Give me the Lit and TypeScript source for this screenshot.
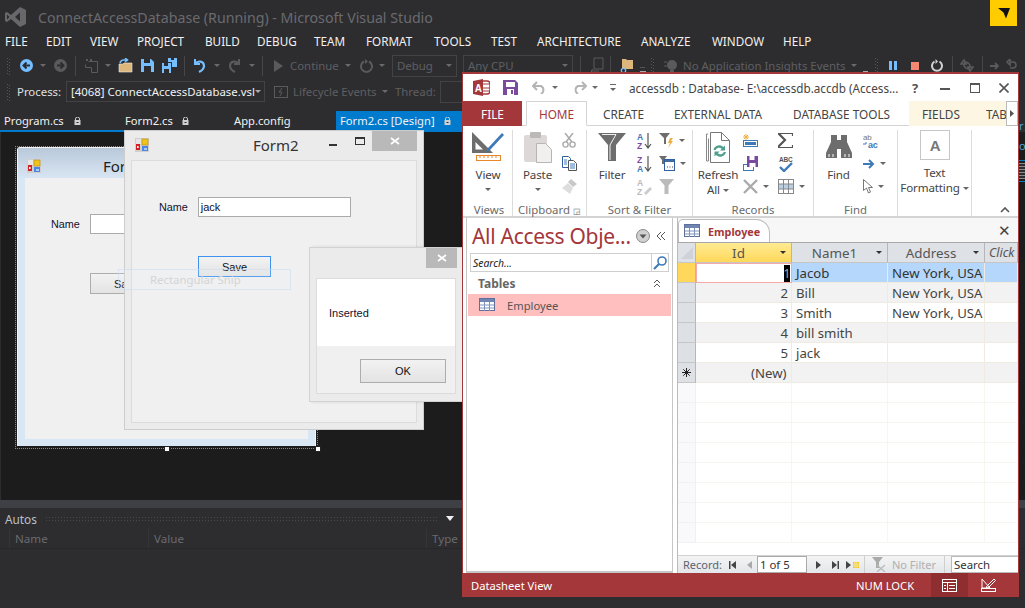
import { LitElement, html, css, svg } from "lit";
import { customElement } from "lit/decorators.js";

type Cell = { x: number; c: unknown; cls?: string };

const dd = html`<span class="dd"></span>`;
const dim = (t: string) => html`<span class="dimt">${t}</span>`;

const ic = (w: number, h: number, body: unknown, vb?: string) =>
  html`<svg width=${w} height=${h} viewBox=${vb ?? `0 0 ${w} ${h}`} class="ic">${body}</svg>`;

const grip = ic(4, 18, svg`<g fill="#55555a">${[1, 4, 7, 10, 13, 16].map((y) => svg`<rect x="0" y=${y} width="1" height="1"/><rect x="2" y=${y + 1} width="1" height="1"/>`)}</g>`);
const tsep = html`<span class="tsep"></span>`;
const lock = ic(7, 8, svg`<path d="M1.5 3V2a2 2 0 0 1 4 0v1" fill="none" stroke="#d0d0d0"/><rect x="0.5" y="3" width="6" height="5" fill="#d0d0d0"/><rect x="2.5" y="5" width="2" height="1" fill="#2d2d30"/>`);

const appIcon = ic(15, 15, svg`<rect x="0" y="0" width="14" height="14" fill="#cfcfcf"/><rect x="1" y="1" width="5" height="5" fill="#e6e6e6"/><rect x="7" y="1" width="6" height="6" fill="#f0c419" stroke="#b98a10" stroke-width=".6"/><rect x="1" y="6" width="4" height="6" fill="#d42020"/><rect x="2" y="8" width="1.6" height="2" fill="#fff"/><rect x="7" y="8" width="6" height="5" fill="#4d86e0"/><rect x="9" y="10" width="3" height="2" fill="#a8ccf4"/>`);

const tableIcon = ic(17, 14, svg`<rect x=".5" y=".5" width="15" height="12" fill="#fff" stroke="#5f6f9a"/><rect x="1" y="1" width="14" height="3" fill="#6f85b4"/><path d="M1 7h14M1 10h14M5.5 4v9M10.5 4v9" stroke="#7f95bf" fill="none"/>`);

@customElement("app-root")
export class AppRoot extends LitElement {
  static styles = css`
    :host { display: block; width: 1025px; height: 608px; position: relative; overflow: hidden; background: #2d2d30;
      font-family: "Noto Sans", "Open Sans", sans-serif; color: #f1f1f1; }
    * { box-sizing: border-box; }
    .ic { display: block; flex: none; }
    .row { display: flex; align-items: center; white-space: nowrap; }
    .cell { flex: none; display: flex; align-items: center; overflow: visible; }
    .vs { display: flex; flex-direction: column; width: 1025px; height: 608px; }
    .vstitle { height: 34px; font-size: 14.2px; color: #6a6a6e; padding-left: 5px; gap: 12px; position: relative; align-items: center; flex: none; }
    .flag { margin-left: auto; margin-right: 8px; width: 27px; height: 26px; background: #ffcc00; align-self: flex-start; display: flex; align-items: center; justify-content: center; }
    .menu { height: 14px; font-size: 11.7px; color: #f1f1f1; flex: none; }
    .tool { height: 23px; margin-top: 6px; font-size: 11.4px; color: #5d5d60; flex: none; }
    .tool2 { height: 23px; margin-top: 3px; font-size: 11.4px; color: #5d5d60; flex: none; }
    .dimt { color: #5f5f62; }
    .lit { color: #e0e0e0; }
    .dd { display: inline-block; width: 0; height: 0; border-left: 3.5px solid transparent; border-right: 3.5px solid transparent; border-top: 3.5px solid #6a6a6a; flex: none; }
    .dd.l { border-top-color: #aaa; }
    .tsep { display: block; width: 1px; height: 20px; background: #46464a; }
    .combo { height: 22px; border: 1px solid #434346; display: flex; align-items: center; padding: 0 4px; justify-content: space-between; color: #5f5f62; }
    .combo.active { color: #f1f1f1; height: 21px; }
    .tabs { height: 19px; margin-top: 8px; font-size: 11.2px; color: #f1f1f1; flex: none; }
    .tabs .cell { height: 19px; }
    .act { background: #007acc; padding-left: 4px; gap: 9px; }
    .tabline { height: 2px; background: #007acc; width: 462px; flex: none; }
    .doc { flex: 1; background: #1c1c1c; margin-left: 1px; position: relative; min-height: 0; }
    .split { height: 8px; background: #3f3f46; flex: none; }
    .autos { height: 100px; flex: none; background: #2d2d30; }
    .ahead { height: 21px; font-size: 11.8px; color: #b8c0c8; padding: 0 5px; gap: 8px; }
    .dots { height: 5px; background-image: radial-gradient(#4a4a4e 0.6px, transparent 0.7px); background-size: 3px 3px; width: 393px; flex: none; }
    .tri { width: 0; height: 0; border-left: 4px solid transparent; border-right: 4px solid transparent; border-top: 5px solid #f0f0f0; }
    .acols { height: 20px; font-size: 11.6px; color: #6a6a6e; border-bottom: 1px solid #262628; padding-left: 9px; }
    .acols .cell { height: 19px; border-left: 1px solid #353538; padding-left: 5px; }
    .side { position: absolute; left: 1019px; top: 120px; width: 6px; display: flex; flex-direction: column; overflow: hidden; }
    .side span { display: block; }
    .sb { color: #4ea6dc; font-size: 11px; line-height: 12px; height: 20px; }
    .sl { height: 1px; width: 6px; background: #007acc; }
    .ss { height: 16px; width: 6px; margin: 2px 0; background: repeating-linear-gradient(#8a8a8a 0 1px, #2d2d30 1px 3px); }

    /* winforms */
    .wf { font-family: "Liberation Sans", Arial, sans-serif; font-size: 10.8px; color: #101030; }
    .select { position: absolute; left: 14px; top: 14px; width: 303px; height: 303px; border: 1px dotted #8a8a8a; }
    .handle { position: absolute; width: 6px; height: 6px; background: #fff; border: 1px solid #222; top: 299px; }
    .h1 { left: 148px; } .h2 { left: 299px; }
    .dform { position: absolute; left: 16px; top: 15px; width: 299px; height: 299px; background: #d9e6f4; display: flex; flex-direction: column; border: 1px solid #f4f4f4; border-bottom: 0; border-radius: 3px 3px 0 0; }
    .dtitle { height: 30px; background: linear-gradient(#b9c9da, #d8e5f3); padding: 6px 0 0 9px; font-size: 15px; color: #222; font-family: "Noto Sans", sans-serif; flex: none; }
    .dt { margin-left: 61px; }
    .dclient { flex: 1; margin: 0 7px 7px; background: #f0f0f0; padding: 36px 0 0 26px; }
    .nm { display: flex; align-items: center; height: 20px; gap: 10px; }
    .tb { display: block; width: 153px; height: 20px; border: 1px solid #ababab; background: #fff; padding: 2px; color: #101030; line-height: 14px; font-size: 11px; }
    .wbtn { width: 73px; height: 21px; border: 1px solid #adadad; background: linear-gradient(#f2f2f2, #e3e3e3); display: flex; align-items: center; justify-content: center; color: #101010; font-size: 11px; }
    .dbtn { margin: 39px 0 0 39px; }
    .win2 { position: absolute; left: 124px; top: 130px; width: 300px; height: 300px; background: #ebebeb; border: 1px solid #cdcdcd; display: flex; flex-direction: column; }
    .w2t { height: 29px; flex: none; align-items: flex-start; }
    .w2t .appi { margin: 7px 0 0 10px; }
    .w2n { margin: 4px 0 0 103px; font: 15px "Noto Sans", sans-serif; color: #333; width: 76px; flex: none; }
    .mn { width: 8px; height: 2px; background: #333; margin: 13px 0 0 0; flex: none; }
    .mx { width: 10px; height: 8px; border: 1px solid #333; border-top-width: 2px; margin: 6px 0 0 18px; flex: none; }
    .xb { width: 45px; height: 20px; background: #b9b9b9; display: flex; align-items: center; justify-content: center; margin-left: 7px; flex: none; }
    .w2c { flex: 1; margin: 0 6px 6px; border: 1px solid #dcdcdc; background: #f0f0f0; padding: 36px 0 0 27px; }
    .sbtn { margin: 39px 0 0 39px; border: 1px solid #3f93f0; }
    .snip { position: absolute; left: 118px; top: 269px; width: 173px; height: 21px; border: 1px solid rgba(200,220,240,.55); padding-left: 31px; font: 11.4px "Noto Sans", sans-serif; color: #d4d4d4; display: flex; align-items: center; background: rgba(238,242,246,.15); }
    .msg { position: absolute; left: 309px; top: 247px; width: 154px; height: 155px; background: #ebebeb; border: 1px solid #d2d2d2; box-shadow: 3px 0 3px rgba(0,0,0,.12); display: flex; flex-direction: column; }
    .msgt { height: 30px; flex: none; display: flex; justify-content: flex-end; padding-right: 5px; }
    .msgt .xb { width: 31px; margin: 0; }
    .msgc { flex: 1; margin: 0 6px 7px; border: 1px solid #dcdcdc; background: #f0f0f0; display: flex; flex-direction: column; }
    .msgw { height: 67px; background: #fff; padding-left: 12px; display: flex; align-items: center; font-size: 11px; }
    .okr { display: flex; justify-content: flex-end; padding: 13px 9px 0 0; }
    .okb { width: 86px; height: 24px; }

    /* access */
    .acc { position: absolute; left: 462px; top: 72px; width: 557px; height: 525px; background: #fff; border: 1px solid #a4373a; border-top-width: 2px; border-bottom: 0; display: flex; flex-direction: column; color: #444; font-family: "Noto Sans", sans-serif; }
    .att { height: 27px; flex: none; padding-left: 10px; font-size: 11.7px; color: #444; }
    .att .cell { height: 27px; }
    .atab { height: 25px; flex: none; align-items: stretch; font-size: 11.8px; border-bottom: 1px solid #d4d4d4; position: relative; }
    .atab .cell { height: 25px; }
    .file { background: #a4373a; color: #fff; justify-content: center; }
    .home { background: #fff; color: #a4373a; border: 1px solid #d4d4d4; border-bottom: 1px solid #fff; justify-content: center; height: 25px; }
    .fields { background: #fdf6e3; padding-left: 13px; }
    .tabc { overflow: hidden; background: #fdf6e3; }
    .scr { width: 12px; background: #fff; border: 1px solid #bbb; display: flex; align-items: center; justify-content: center; flex: none; height: 25px; }
    .rib { height: 92px; flex: none; display: flex; padding-top: 4px; font-size: 11.6px; letter-spacing: -.15px; color: #444; border-bottom: 2px solid #d4d4d4; position: relative; padding-left: 3px; }
    .grp { flex: none; display: flex; flex-direction: column; border-right: 1px solid #dcdcdc; height: 86px; }
    .gb { flex: 1; display: flex; min-height: 0; }
    .gl { height: 13px; line-height: 13px; font-size: 11.4px; letter-spacing: 0; text-align: center; color: #6a6a6a; white-space: nowrap; }
    .big { display: flex; flex-direction: column; align-items: center; flex: none; line-height: 15px; white-space: nowrap; }
    .bi { height: 34px; display: flex; align-items: center; justify-content: center; margin-bottom: 3px; }
    .big .dd { margin-top: 6px; border-top-color: #666; }
    .inl { display: flex; align-items: center; gap: 3px; }
    .big .inl .dd { margin-top: 1px; }
    .sm { display: grid; grid-auto-rows: 23px; flex: none; margin-top: -1px; }
    .si { display: flex; align-items: center; gap: 5px; }
    .si .dd { border-top-color: #666; }
    .ta { display: block; }
    .tx { margin-top: 5px; }
    .colx { position: absolute; right: 8px; bottom: 3px; }
    .amain { flex: 1; display: flex; min-height: 0; padding-left: 3px; }
    .nav { width: 207px; flex: none; border: 1px solid #c6c6c6; border-top: 0; border-bottom: 2px solid #c6c6c6; display: flex; flex-direction: column; padding: 0 1px; }
    .navh { height: 35px; flex: none; align-items: center; font-size: 21px; color: #a4373a; padding-left: 4px; }
    .navt { width: 164px; flex: none; letter-spacing: -.3px; }
    .navc { margin-left: 7px; }
    .srch { height: 19px; margin: 0 2px; border: 1px solid #cfcfcf; display: flex; align-items: center; justify-content: space-between; font-style: italic; font-size: 10.4px; color: #222; padding-left: 2px; flex: none; }
    .srch b { font-weight: 400; }
    .mag { border-left: 1px solid #cfcfcf; width: 17px; height: 17px; display: flex; align-items: center; justify-content: center; }
    .navg { height: 22px; flex: none; font-size: 12px; font-weight: 700; color: #666; padding-left: 10px; justify-content: space-between; padding-right: 10px; }
    .navi { height: 22px; background: #ffbfbf; padding-left: 11px; gap: 11px; font-size: 11.2px; color: #555; flex: none; }
    .ds { width: 341px; flex: none; display: flex; flex-direction: column; border-left: 1px solid #bbb; margin-left: 4px; }
    .dst { height: 24px; flex: none; background: #f7f7f7; position: relative; display: flex; align-items: flex-end; justify-content: space-between; padding-right: 7px; }
    .dtab { width: 92px; height: 23px; background: #fff; border: 1px solid #bdbdbd; border-bottom: 0; border-radius: 5px 14px 0 0; display: flex; align-items: center; padding-left: 5px; gap: 7px; font-weight: 700; font-size: 10.8px; color: #a4373a; }
    .dx { align-self: center; font-size: 15px; color: #444; line-height: 14px; }
    .grid { flex: 1; display: grid; grid-template-columns: 18px 96px 96px 97px 33px; grid-auto-rows: 20px; align-content: start; background: #fff; overflow: hidden; min-height: 0; font-size: 13.2px; color: #444; border-top: 1px solid #a8a8a8; }
    .gc { border-right: 1px solid #efebe0; border-bottom: 1px solid #efebe0; padding: 0 3px 0 4px; display: flex; align-items: center; white-space: nowrap; overflow: hidden; min-width: 0; }
    .gh { background: #dee1e6; border-right: 1px solid #b6b6b6; border-bottom: 1px solid #c6c6c6; justify-content: center; color: #555; position: relative; font-size: 13.4px; padding-right: 14px; }
    .gc.corner { padding: 0; }
    .gh .dd { position: absolute; right: 5px; top: 8px; border-top-color: #333; }
    .gh.idh { background: linear-gradient(#ffeb94, #ffd85a); color: #555; }
    .gh.clk { font-style: italic; justify-content: flex-start; font-size: 12.4px; padding: 0 0 0 4px; }
    .sel { background: #dde1e6; border-right: 1px solid #b6b6b6; border-bottom: 1px solid #c6c6c6; padding: 0; justify-content: center; color: #222; }
    .sel.cur { background: #ffd75a; }
    .sel.em { background: #f9f9fb; border-right-color: #f0f0f0; border-bottom-color: #f0f0f6; }
    .num { justify-content: flex-end; }
    .alt { background: #f2f2f2; }
    .hi { background: #b4d7fb; color: #333; }
    .cur1 { border: 1px solid #f5a9a9; padding-right: 1px; }
    .cur1 i { font-style: normal; background: #000; color: #aaa; width: 6px; height: 17px; display: flex; align-items: center; justify-content: center; font-size: 12px; }
    .newc { padding-left: 55px; }
    .gc.e { border-color: #f7f5ef; }
    .rn { height: 18px; flex: none; font-size: 11px; color: #5a6470; background: linear-gradient(#f4f4f4, #e3e6ea); border-top: 1px solid #d2d2d2; padding-left: 5px; }
    .rn .cell { height: 17px; }
    .rbox { height: 17px; width: 50px; border: 1px solid #aaa; background: #fff; color: #333; padding-left: 2px; display: flex; align-items: center; font-size: 11.4px; }
    .rsrch { height: 17px; background: #fff; border: 1px solid #bbb; color: #333; padding-left: 2px; display: flex; align-items: center; width: 67px; border-right: 0; font-size: 11.4px; }
    .nf { color: #b0b0b0; }
    .sep2 { width: 1px; height: 17px; background: #cfcfcf; }
    .ast { height: 24px; flex: none; background: #a4373a; color: #fff; font-size: 11.2px; padding-left: 8px; }
    .ast .cell { height: 24px; }
    .viewon { background: #8e2e31; justify-content: center; }
    .dsg { margin-left: 13px; }
    .tlh { font-size: 13px; color: #555; font-weight: 700; }
    .tlm { display: block; width: 10px; height: 2px; background: #555; margin-top: 3px; }
    .lk1 { margin-left: 10px; } .lk2 { margin-left: 9px; }
    .clipi { font-size: 8px; }
  `;

  private row(items: Cell[], end: number) {
    return items.map((it, i) => {
      const next = i + 1 < items.length ? items[i + 1].x : end;
      return html`<span class="cell ${it.cls ?? ""}" style="width:${next - it.x}px">${it.c}</span>`;
    });
  }

  private titleRow() {
    return html`<div class="row vstitle">
      ${ic(21, 20, svg`<path fill="#68686c" fill-rule="evenodd" d="M15 0l6 3v14l-6 3-9-8-4 3-2-1V6l2-1 4 3zM15 5.5L10 10l5 4.5zM2 7.5v5L4.5 10z"/>`)}
      <span>ConnectAccessDatabase (Running) - Microsoft Visual Studio</span>
      <span class="flag">${ic(12, 11, svg`<path d="M0 0h12L8 10.5 5.5 4.5z" fill="#111"/>`)}</span>
    </div>`;
  }

  private menu() {
    const m: [number, string][] = [[5, "FILE"], [46, "EDIT"], [90, "VIEW"], [137, "PROJECT"], [205, "BUILD"], [257, "DEBUG"], [314, "TEAM"], [366, "FORMAT"], [434, "TOOLS"], [491, "TEST"], [537, "ARCHITECTURE"], [641, "ANALYZE"], [712, "WINDOW"], [783, "HELP"]];
    return html`<div class="row menu" style="padding-left:5px">${this.row(m.map(([x, t]) => ({ x, c: t })), 830)}</div>`;
  }

  private toolbar() {
    const blue = "#75beff";
    const grey = "#5a5a5e";
    const circ = (f: string, d: string) => ic(13, 13, svg`<circle cx="6.5" cy="6.5" r="6.5" fill=${f}/><path d=${d} fill="none" stroke="#2d2d30" stroke-width="2"/>`);
    const items: Cell[] = [
      { x: 7, c: grip },
      { x: 20, c: circ(blue, "M10 6.5H4M6.5 3.5l-3 3 3 3") },
      { x: 40, c: dd },
      { x: 54, c: circ(grey, "M3 6.5h6M6.5 3.5l3 3-3 3") },
      { x: 75, c: tsep },
      { x: 85, c: ic(13, 15, svg`<path d="M3.5 3.5h9v11h-6v-5h-6v-3" fill="none" stroke=${grey}/><path d="M1 1l2 2M3 1L1 3M5 1l2 2M7 1L5 3" stroke=${grey}/>`) },
      { x: 105, c: dd },
      { x: 118, c: ic(15, 15, svg`<path d="M1 6h4l1-1h8v9H1z" fill="#dcb67a" stroke="#eee" stroke-width=".6"/><path d="M2 5a4 4 0 0 1 4-3h3M7 0l2.5 2L7 4" fill="none" stroke=${blue} stroke-width="1.6"/>`) },
      { x: 141, c: ic(13, 13, svg`<path d="M0 0h10l3 3v10H0z" fill=${blue}/><rect x="3" y="0" width="6" height="4" fill="#2d2d30"/><rect x="3" y="7" width="7" height="6" fill="#2d2d30"/>`) },
      { x: 162, c: ic(15, 15, svg`<path d="M0 5h9v10H0z" fill=${blue}/><path d="M6 0h9v9h-5V4H6z" fill=${blue}/><rect x="2" y="5" width="4" height="3" fill="#2d2d30"/><rect x="9" y="0" width="3" height="2" fill="#2d2d30"/><rect x="2" y="11" width="5" height="4" fill="#2d2d30"/>`) },
      { x: 184, c: tsep },
      { x: 193, c: ic(13, 15, svg`<path d="M2 1v5h5" fill="none" stroke=${blue} stroke-width="2"/><path d="M2 6c3-4 9-3 9 2 0 3-3 5-5 6" fill="none" stroke=${blue} stroke-width="2.2"/>`) },
      { x: 214, c: dd },
      { x: 228, c: ic(13, 15, svg`<path d="M11 1v5H6" fill="none" stroke=${grey} stroke-width="2"/><path d="M11 6C8 2 2 3 2 8c0 3 3 5 5 6" fill="none" stroke=${grey} stroke-width="2.2"/>`) },
      { x: 249, c: dd },
      { x: 262, c: tsep },
      { x: 274, c: ic(9, 12, svg`<path d="M0 0l9 6-9 6z" fill=${grey}/>`) },
      { x: 290, c: dim("Continue") },
      { x: 345, c: dd },
      { x: 360, c: ic(13, 14, svg`<path d="M4 2.5a5.5 5.5 0 1 0 5 0" fill="none" stroke=${grey} stroke-width="2"/><path d="M5 0v5l3-2.5z" fill=${grey}/>`) },
      { x: 379, c: dd },
      { x: 392, c: html`<span class="combo" style="width:65px">Debug ${dd}</span>` },
      { x: 463, c: html`<span class="combo" style="width:110px">Any CPU ${dd}</span>` },
      { x: 580, c: tsep },
      { x: 590, c: ic(15, 18, svg`<path d="M4 1h9v11H4zM1 14h8M3 12l-2 2 2 2M9 16h5" fill="none" stroke=${grey}/>`) },
      { x: 610, c: tsep },
      { x: 620, c: ic(14, 18, svg`<path d="M2 2h4l1 1h6v9H2z" fill="#dcb67a"/><circle cx="3.5" cy="13.5" r="2.2" fill="#2d2d30" stroke=${blue} stroke-width="1.3"/><path d="M1.8 15.5L0 17" stroke=${blue} stroke-width="1.3"/>`) },
      { x: 640, c: ic(6, 14, svg`<rect y="12" width="6" height="1" fill="#aaa"/><rect y="8" width="5" height="1" fill="#555"/>`) },
      { x: 651, c: grip },
      { x: 664, c: ic(14, 14, svg`<circle cx="8" cy="6" r="5" fill=${grey}/><rect x="6" y="11" width="4" height="3" fill=${grey}/><path d="M0 3h3M0 7h3" stroke=${grey}/>`) },
      { x: 683, c: dim("No Application Insights Events") },
      { x: 851, c: dd },
      { x: 863, c: ic(5, 14, svg`<rect y="12" width="5" height="1" fill="#aaa"/>`) },
      { x: 875, c: grip },
      { x: 889, c: ic(8, 9, svg`<rect width="3" height="9" fill=${blue}/><rect x="5" width="3" height="9" fill=${blue}/>`) },
      { x: 911, c: ic(8, 8, svg`<rect width="8" height="8" fill="#f48771"/>`) },
      { x: 931, c: ic(12, 13, svg`<path d="M3.5 2.5a5 5 0 1 0 5 0" fill="none" stroke="#d0d0d0" stroke-width="2"/><path d="M4.5 0v5L7 2.5z" fill="#d0d0d0"/>`) },
      { x: 952, c: tsep },
      { x: 960, c: ic(14, 13, svg`<path d="M4 1L1 5h5zM10 12l3-4H8zM4 4a4 4 0 0 1 6 4M10 9a4 4 0 0 1-6-4" fill="none" stroke=${grey} stroke-width="1.6"/>`) },
      { x: 982, c: tsep },
      { x: 990, c: ic(10, 10, svg`<path d="M0 5h8M5 2l3 3-3 3" fill="none" stroke=${grey} stroke-width="1.8"/>`) },
      { x: 1005, c: ic(14, 13, svg`<path d="M2 3l3-3v6zM5 3h3a3 3 0 0 1 0 6H5" fill="none" stroke=${grey} stroke-width="1.6"/>`) },
    ];
    return html`<div class="row tool" style="padding-left:7px">${this.row(items, 1025)}</div>`;
  }

  private toolbar2() {
    const items: Cell[] = [
      { x: 7, c: grip },
      { x: 17, c: html`<span class="lit">Process:</span>` },
      { x: 66, c: html`<span class="combo active" style="width:199px"><span>[4068] ConnectAccessDatabase.vsl</span><span class="dd l"></span></span>` },
      { x: 274, c: ic(14, 12, svg`<rect x=".5" y=".5" width="13" height="11" fill="none" stroke="#5a5a5e"/><path d="M8 2L5 6h3l-2 4" fill="none" stroke="#5a5a5e"/>`) },
      { x: 293, c: dim("Lifecycle Events") },
      { x: 382, c: dd },
      { x: 395, c: dim("Thread:") },
      { x: 440, c: html`<span class="combo" style="width:40px"></span>` },
    ];
    return html`<div class="row tool2" style="padding-left:7px">${this.row(items, 480)}</div>`;
  }

  private tabs() {
    const items: Cell[] = [
      { x: 4, c: html`<span>Program.cs</span><span class="lk1">${lock}</span>` },
      { x: 125, c: html`<span>Form2.cs</span><span class="lk2">${lock}</span>` },
      { x: 234, c: "App.config" },
      { x: 336, c: html`<span>Form2.cs [Design]</span>${lock}`, cls: "act" },
    ];
    return html`<div class="row tabs" style="padding-left:4px">${this.row(items, 462)}</div><div class="tabline"></div>`;
  }

  private designForm() {
    return html`<div class="select wf"><div class="handle h1"></div><div class="handle h2"></div></div>
      <div class="dform wf">
        <div class="row dtitle">${appIcon}<span class="dt">Form2</span></div>
        <div class="dclient">
          <div class="nm"><span>Name</span><span class="tb"></span></div>
          <div class="wbtn dbtn">Save</div>
        </div>
      </div>`;
  }

  private form2() {
    const x = ic(10, 10, svg`<path d="M1 2l8 6M9 2L1 8" stroke="#fff" stroke-width="1.6"/>`);
    return html`<div class="win2 wf">
      <div class="row w2t"><span class="appi">${appIcon}</span><span class="w2n">Form2</span><span class="mn"></span><span class="mx"></span><span class="xb">${x}</span></div>
      <div class="w2c">
        <div class="nm"><span>Name</span><span class="tb">jack</span></div>
        <div class="wbtn sbtn">Save</div>
      </div>
    </div>
    <div class="snip">Rectangular Snip</div>
    <div class="msg wf">
      <div class="msgt"><span class="xb">${x}</span></div>
      <div class="msgc">
        <div class="msgw">Inserted</div>
        <div class="okr"><div class="wbtn okb">OK</div></div>
      </div>
    </div>`;
  }

  private accessTitle() {
    const items: Cell[] = [
      { x: 473, c: ic(17, 17, svg`<rect x="6" y="2" width="11" height="13" rx="3" fill="none" stroke="#a4373a" stroke-width="1.4"/><path d="M8 5h9M8 9h9M8 12h9" stroke="#a4373a"/><path d="M0 2l10-2v17L0 15z" fill="#a4373a"/><text x="1.8" y="12.5" font-size="10" font-weight="700" fill="#fff" font-family="Liberation Sans">A</text>`) },
      { x: 503, c: ic(15, 15, svg`<path d="M0 0h12l3 3v12H0z" fill="#7a4a9e"/><rect x="3" y="2" width="9" height="5" fill="#fff"/><rect x="4" y="9" width="7" height="6" fill="#fff"/><rect x="8" y="10" width="2" height="4" fill="#7a4a9e"/>`) },
      { x: 532, c: ic(15, 13, svg`<path d="M5 1L1 5l4 4M1 5h8a4.5 4.5 0 0 1 0 8" fill="none" stroke="#b5b5b5" stroke-width="2"/>`) },
      { x: 552, c: dd },
      { x: 572, c: ic(15, 13, svg`<path d="M10 1l4 4-4 4M14 5H6a4.5 4.5 0 0 0 0 8" fill="none" stroke="#b5b5b5" stroke-width="2"/>`) },
      { x: 592, c: dd },
      { x: 610, c: ic(7, 8, svg`<rect width="6" height="1" fill="#666"/><path d="M0 4h6L3 7z" fill="#666"/>`) },
      { x: 629, c: "accessdb : Database- E:\\accessdb.accdb (Access..." },
      { x: 912, c: html`<span class="tlh">?</span>` },
      { x: 940, c: html`<span class="tlm"></span>` },
      { x: 970, c: ic(10, 10, svg`<rect x=".5" y=".5" width="9" height="9" fill="none" stroke="#555"/><rect width="10" height="2" fill="#555"/>`) },
      { x: 999, c: ic(10, 10, svg`<path d="M.5.5l9 9M9.5.5l-9 9" stroke="#555" stroke-width="1.6"/>`) },
    ];
    return html`<div class="row att">${this.row(items, 1018)}</div>`;
  }

  private accessTabs() {
    const items: Cell[] = [
      { x: 463, c: "FILE", cls: "file" },
      { x: 522, c: "" },
      { x: 526, c: "HOME", cls: "home" },
      { x: 587, c: "" },
      { x: 603, c: "CREATE" },
      { x: 674, c: "EXTERNAL DATA" },
      { x: 793, c: "DATABASE TOOLS" },
      { x: 909, c: "FIELDS", cls: "fields" },
      { x: 986, c: "TAB", cls: "tabc" },
    ];
    return html`<div class="row atab">${this.row(items, 1006)}<span class="scr">${ic(4, 7, svg`<path d="M0 0l4 3.5L0 7z" fill="#555"/>`)}</span></div>`;
  }

  private ribbon() {
    const g = "#6d6d6d";
    const bl = "#3f7ab8";
    const pu = "#7a4a9e";
    const view = ic(32, 30, svg`<path fill=${g} fill-rule="evenodd" d="M0 0l21 21H0zM3.5 10v7.5H11z"/><path d="M30 1l-14 15-2 4 4-2L32 3z" fill=${bl}/><rect x="4.5" y="23.5" width="24" height="5" fill="#fff" stroke="#e8872c"/><path d="M8 24v2M12 24v2M16 24v2M20 24v2M24 24v2" stroke="#e8872c"/>`);
    const paste = ic(30, 31, svg`<rect x="1" y="3" width="23" height="27" rx="2" fill="#dcd8d8"/><rect x="7" y="0" width="11" height="6" rx="1" fill="#bdb8b8"/><path d="M13.5 11.5h9l6 6v13h-15z" fill="#f2efef" stroke="#b9b4b4"/>`);
    const scis = ic(15, 15, svg`<path d="M3 0l7 9M11 0L4 9" stroke="#aaa" stroke-width="1.5"/><circle cx="3.5" cy="11.5" r="2.6" fill="none" stroke="#aaa" stroke-width="1.4"/><circle cx="10.5" cy="11.5" r="2.6" fill="none" stroke="#aaa" stroke-width="1.4"/>`);
    const copy = ic(15, 15, svg`<path d="M.5.5h6l2 2v9h-8z" fill="#fff" stroke="#2f5f9f"/><path d="M6.5 4.5h5l3 3v7h-8z" fill="#fff" stroke="#555"/><path d="M8 8h5M8 10h5M8 12h5M2 4h3M2 6h3M2 8h3" stroke="#3f7ab8"/>`);
    const brush = ic(15, 15, svg`<path d="M9 0l6 5-4 3-5-5z" fill="#c8c8c8"/><path d="M6 4l5 5-3 6-8-6z" fill="#ddd"/>`);
    const funnel = ic(28, 28, svg`<path d="M0 0h28L18 12v16h-8V12z" fill=${g}/><path d="M4 1.5h14L12 12v15" fill="none" stroke="#fff" stroke-width=".9"/>`);
    const az = (a: string, b: string, c1: string, c2: string) => ic(15, 16, svg`<text x="0" y="7" font-size="8.5" font-weight="700" fill=${c1} font-family="Liberation Sans">${a}</text><text x="0" y="15.5" font-size="8.5" font-weight="700" fill=${c2} font-family="Liberation Sans">${b}</text><path d="M11 0v14M8 11l3 4 3-4" fill="none" stroke="#555" stroke-width="1.2"/>`);
    const azg = ic(15, 16, svg`<text x="0" y="7" font-size="8.5" font-weight="700" fill="#bbb" font-family="Liberation Sans">A</text><text x="0" y="15.5" font-size="8.5" font-weight="700" fill="#bbb" font-family="Liberation Sans">Z</text><path d="M7 14l6-6 2 2-6 6z" fill="#ccc"/>`);
    const fbolt = ic(15, 15, svg`<path d="M0 0h11L7 5v6H5V5z" fill=${g}/><path d="M11 5l3 0-2 3h2l-5 7 2-5H9z" fill="#f0b040"/>`);
    const fform = ic(16, 15, svg`<path d="M0 0h8L5 4v4H3V4z" fill=${g}/><rect x="5.5" y="3.5" width="10" height="11" fill="#fff" stroke="#2f5f9f"/><rect x="6" y="4" width="9" height="2" fill="#3f6f9f"/><path d="M8 11h1M10.5 11h1M13 11h1" stroke="#444"/>`);
    const fg = ic(15, 15, svg`<path d="M0 0h15L9.5 6.5V15h-4V6.5z" fill="#bbb"/>`);
    const refresh = ic(26, 31, svg`<path d="M3.5 6.5V29h-2V2H3" fill="none" stroke="#888"/><path d="M5.5.5h11l8 8v22h-19z" fill="#fff" stroke="#777"/><path d="M16.5.5v8h8" fill="none" stroke="#777"/><path d="M8.5 18a6 6 0 0 1 10-3l1.5-1.5v5h-5l1.7-1.7a3.6 3.6 0 0 0-6 1.2zM21 20a6 6 0 0 1-10 3l-1.5 1.5v-5h5l-1.7 1.7a3.6 3.6 0 0 0 6-1.2z" fill="#4f9f8f"/>`);
    const newr = ic(15, 13, svg`<path d="M3 0v6M0 3h6M1 1l4 4M5 1L1 5" stroke="#f0b040"/><rect x=".5" y="6.5" width="14" height="6" fill="#fff" stroke="#3f7ab8"/><rect x="2" y="8" width="11" height="3" fill="#3f7ab8"/>`);
    const saver = ic(15, 15, svg`<rect x=".5" y="8.5" width="10" height="6" fill="#fff" stroke="#3f7ab8"/><rect x="4" y="0" width="11" height="11" fill=${pu}/><rect x="6.5" y="0" width="5" height="4" fill="#fff"/><rect x="6.5" y="7" width="6" height="4" fill="#fff"/>`);
    const delx = ic(15, 15, svg`<path d="M1 1l13 13M14 1L1 14" stroke="#aaa" stroke-width="2.4"/>`);
    const sigma = ic(15, 15, svg`<path d="M15 3V0H0l7 7-7 7v1h15v-3" fill="none" stroke="#555" stroke-width="2.2"/>`);
    const abc = ic(15, 16, svg`<text x="1" y="6" font-size="6.5" font-weight="700" fill="#555" font-family="Liberation Sans">ABC</text><path d="M2 11l4 4 8-8" fill="none" stroke="#3f7ab8" stroke-width="2.4"/>`);
    const more = ic(16, 15, svg`<rect x=".5" y=".5" width="15" height="14" fill="#fff" stroke="#888"/><rect x="1" y="5" width="14" height="5" fill="#b8cfe4"/><path d="M1 5h14M1 10h14M5.5 1v14M10.5 1v14" stroke="#888"/>`);
    const bino = ic(26, 24, svg`<path fill=${g} d="M5 0h6v5h4V0h6v7l5 11v5H15v-9h-4v9H0v-5L5 7z"/><path d="M3 22V19M7 22V19M19 22V19M23 22V19" stroke="#fff"/>`);
    const repl = ic(17, 15, svg`<text x="0" y="6.5" font-size="8" fill="#777" font-family="Liberation Sans">ab</text><text x="5" y="14.5" font-size="9" font-weight="700" fill="#3f7ab8" font-family="Liberation Sans">ac</text><path d="M0 11h3M3 9v2" stroke="#3f7ab8"/>`);
    const arrow = ic(12, 10, svg`<path d="M0 5h9M6 1l4 4-4 4" fill="none" stroke="#3f7ab8" stroke-width="2"/>`);
    const cursor = ic(10, 15, svg`<path d="M.5.5v11l3-2.5 2 5 2-1-2-4.5h4z" fill="#fff" stroke="#777"/>`);
    const textA = html`<span class="ta">${ic(30, 30, svg`<rect x=".5" y=".5" width="29" height="29" fill="#fff" stroke="#c6c6c6"/><text x="15" y="21" text-anchor="middle" font-size="15" font-weight="700" fill="#777" font-family="Liberation Sans">A</text>`)}</span>`;

    const big = (w: number, icon: unknown, lab: unknown, below: unknown = dd) => html`<div class="big" style="width:${w}px"><div class="bi">${icon}</div><span>${lab}</span>${below}</div>`;
    const sm = (cols: string, cells: unknown[]) => html`<div class="sm" style="grid-template-columns:${cols}">${cells.map((c) => html`<div class="si">${c}</div>`)}</div>`;
    const grp = (w: number, lab: unknown, body: unknown) => html`<div class="grp" style="width:${w}px"><div class="gb">${body}</div><div class="gl">${lab}</div></div>`;
    const a2 = (i: unknown) => html`${i}${dd}`;

    return html`<div class="rib">
      ${grp(47, "Views", big(44, view, "View"))}
      ${grp(74, html`Clipboard <span class="clipi">◲</span>`, html`${big(49, paste, "Paste")}${sm("15px", [scis, copy, brush])}`)}
      ${grp(106, "Sort & Filter", html`${big(50, funnel, "Filter", "")}${sm("22px 30px", [az("A", "Z", "#3f7ab8", pu), a2(fbolt), az("Z", "A", pu, "#3f7ab8"), a2(fform), azg, fg])}`)}
      ${grp(121, "Records", html`${big(50, refresh, "Refresh", html`<span class="inl">All ${dd}</span>`)}${sm("35px 30px", [newr, sigma, saver, abc, a2(delx), a2(more)])}`)}
      ${grp(84, "Find", html`${big(49, bino, "Find", "")}${sm("30px", [repl, a2(arrow), a2(cursor)])}`)}
      ${grp(74, "", html`<div class="big" style="width:73px">${textA}<span class="tx">Text</span><span class="inl">Formatting ${dd}</span></div>`)}
      <span class="colx">${ic(10, 6, svg`<path d="M1 5l4-4 4 4" fill="none" stroke="#555" stroke-width="1.6"/>`)}</span>
    </div>`;
  }

  private nav() {
    return html`<div class="nav">
      <div class="row navh"><span class="navt">All Access Obje...</span>
        ${ic(14, 14, svg`<circle cx="7" cy="7" r="6.5" fill="#d0d0d0" stroke="#888"/><path d="M3.5 5.5h7L7 9.5z" fill="#555"/>`)}
        <span class="navc">${ic(9, 8, svg`<path d="M4 0L0 4l4 4M8 0L4 4l4 4" fill="none" stroke="#555"/>`)}</span>
      </div>
      <div class="srch"><b>Search...</b><span class="mag">${ic(14, 14, svg`<circle cx="9" cy="5" r="4" fill="none" stroke="#3f7ab8" stroke-width="1.6"/><path d="M6 8l-5 5" stroke="#3f7ab8" stroke-width="2.2"/>`)}</span></div>
      <div class="row navg"><span>Tables</span>${ic(8, 9, svg`<path d="M1 4l3-3 3 3M1 8l3-3 3 3" fill="none" stroke="#555"/>`)}</div>
      <div class="row navi">${tableIcon}<span>Employee</span></div>
    </div>`;
  }

  private datasheet() {
    const rows = [
      ["2", "Bill", "New York, USA"],
      ["3", "Smith", "New York, USA"],
      ["4", "bill smith", ""],
      ["5", "jack", ""],
    ];
    const star = ic(9, 9, svg`<path d="M4.5 0v9M0 4.5h9M1.3 1.3l6.4 6.4M7.7 1.3L1.3 7.7" stroke="#222" stroke-width="1"/>`);
    return html`<div class="ds">
      <div class="dst"><div class="dtab">${tableIcon}<span>Employee</span></div><span class="dx">✕</span></div>
      <div class="grid">
        <div class="gc gh corner">${ic(14, 14, svg`<path d="M13 1v12H1z" fill="#cfd3d9"/>`)}</div>
        <div class="gc gh idh">Id<span class="dd"></span></div>
        <div class="gc gh">Name1<span class="dd"></span></div>
        <div class="gc gh">Address<span class="dd"></span></div>
        <div class="gc gh clk">Click</div>

        <div class="gc sel cur"></div>
        <div class="gc num cur1"><i>1</i></div>
        <div class="gc hi">Jacob</div>
        <div class="gc hi">New York, USA</div>
        <div class="gc hi"></div>

        ${rows.map((r, i) => {
          const c = i % 2 === 0 ? "alt" : "";
          return html`<div class="gc sel"></div><div class="gc num ${c}">${r[0]}</div><div class="gc ${c}">${r[1]}</div><div class="gc ${c}">${r[2]}</div><div class="gc ${c}"></div>`;
        })}

        <div class="gc sel">${star}</div>
        <div class="gc alt newc">(New)</div>
        <div class="gc alt"></div><div class="gc alt"></div><div class="gc alt"></div>

        ${[0, 1, 2, 3, 4, 5, 6, 7].map(() => html`<div class="gc sel em"></div><div class="gc e"></div><div class="gc e"></div><div class="gc e"></div><div class="gc e"></div>`)}
      </div>
      <div class="row rn">${this.row([
        { x: 683, c: "Record:" },
        { x: 729, c: ic(7, 8, svg`<rect width="1.5" height="8" fill="#444"/><path d="M7 0v8L2 4z" fill="#444"/>`) },
        { x: 747, c: ic(5, 8, svg`<path d="M5 0v8L0 4z" fill="#aaa"/>`) },
        { x: 757, c: html`<span class="rbox">1 of 5</span>` },
        { x: 816, c: ic(5, 8, svg`<path d="M0 0v8l5-4z" fill="#444"/>`) },
        { x: 832, c: ic(7, 8, svg`<rect x="5.5" width="1.5" height="8" fill="#444"/><path d="M0 0v8l5-4z" fill="#444"/>`) },
        { x: 846, c: ic(13, 8, svg`<path d="M0 0v8l5-4z" fill="#444"/><path d="M7 1h6v6H7z" fill="#f0c419"/><path d="M9 1v6M11 1v6M7 3h6M7 5h6" stroke="#fff" stroke-width=".5"/>`) },
        { x: 864, c: html`<span class="sep2"></span>` },
        { x: 872, c: ic(16, 15, svg`<path d="M0 0h11L7 5v6H4V5z" fill="#aaa"/><path d="M5 8l8 7M13 8l-8 7" stroke="#bbb" stroke-width="1.3"/>`) },
        { x: 892, c: html`<span class="nf">No Filter</span>` },
        { x: 944, c: html`<span class="sep2"></span>` },
        { x: 951, c: html`<span class="rsrch">Search</span>` },
      ], 1018)}</div>
    </div>`;
  }

  private status() {
    return html`<div class="row ast">${this.row([
      { x: 471, c: "Datasheet View" },
      { x: 856, c: "NUM LOCK" },
      { x: 931, c: ic(15, 13, svg`<rect x=".5" y=".5" width="14" height="12" fill="none" stroke="#fff"/><path d="M1 3.5h13M5.5 4v8M7 6.5h6M7 9.5h6M2 6.5h2M2 9.5h2" stroke="#fff"/>`), cls: "viewon" },
      { x: 968, c: html`<span class="dsg">${ic(15, 14, svg`<path d="M1 1v9h8zM6 8L13 1l1.5 1.5-7 7-2.5 1z" fill="none" stroke="#fff"/><rect x=".5" y="10.5" width="14" height="3" fill="none" stroke="#fff"/>`)}</span>` },
    ], 1018)}</div>`;
  }

  render() {
    return html`
      <div class="vs">
        ${this.titleRow()}
        ${this.menu()}
        ${this.toolbar()}
        ${this.toolbar2()}
        ${this.tabs()}
        <div class="doc">${this.designForm()}</div>
        <div class="split"></div>
        <div class="autos">
          <div class="row ahead"><span>Autos</span><span class="dots"></span><span class="tri"></span></div>
          <div class="row acols">${this.row([{ x: 9, c: "Name" }, { x: 148, c: "Value" }, { x: 426, c: "Type" }], 462)}</div>
        </div>
      </div>
      ${this.form2()}
      <div class="side"><span class="sb">r</span><span class="sb">o</span><span class="sl"></span><span class="ss"></span><span class="sl"></span></div>
      <div class="acc">
        ${this.accessTitle()}
        ${this.accessTabs()}
        ${this.ribbon()}
        <div class="amain">${this.nav()}${this.datasheet()}</div>
        ${this.status()}
      </div>
    `;
  }
}
